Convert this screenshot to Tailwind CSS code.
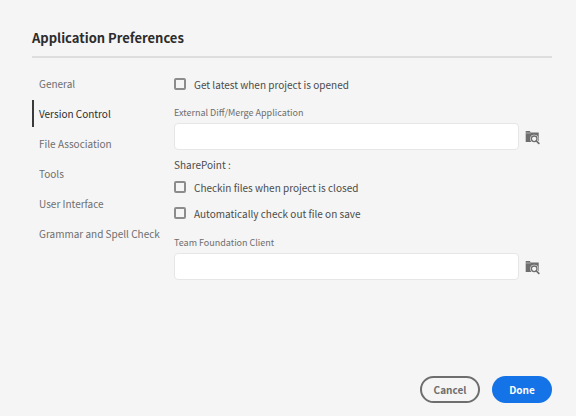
<!DOCTYPE html>
<html lang="en">
  <head>
    <meta charset="UTF-8" />
    <meta name="viewport" content="width=device-width, initial-scale=1.0" />
    <title>Application Preferences</title>
    <script src="https://cdn.jsdelivr.net/npm/@tailwindcss/browser@4"></script>
  </head>
  <body class="flex min-h-screen flex-col bg-[#f5f5f5] pt-6 pr-6 pb-[13px] pl-8 font-['Noto_Sans_CJK_SC','Noto_Sans',sans-serif] text-[10px] text-[#4b4b4b]">

    <!-- Header -->
    <header class="border-b-2 border-[#dedede] pb-1">
      <h1 class="text-[13px] leading-7 font-bold text-[#2c2c2c]">Application Preferences</h1>
    </header>

    <form class="flex flex-1 flex-col">
      <div class="mt-[10px] flex flex-1">
        <!-- Sections -->
        <nav class="w-[142px] shrink-0 text-[#6e6e6e]">
          <ul>
            <li class="flex h-[30px] items-center"><a href="#general" class="pl-[7px]">General</a></li>
            <li class="flex h-[30px] items-center"><a href="#version-control" aria-current="page" class="border-l-2 border-[#3a3a3a] pl-[5px] leading-[27px] text-[#2c2c2c]">Version Control</a></li>
            <li class="flex h-[30px] items-center"><a href="#file-association" class="pl-[7px]">File Association</a></li>
            <li class="flex h-[30px] items-center"><a href="#tools" class="pl-[7px]">Tools</a></li>
            <li class="flex h-[30px] items-center"><a href="#user-interface" class="pl-[7px]">User Interface</a></li>
            <li class="flex h-[30px] items-center"><a href="#grammar" class="pl-[7px] whitespace-nowrap">Grammar and Spell Check</a></li>
          </ul>
        </nav>

        <!-- Version control settings -->
        <section class="min-w-0 flex-1 pt-px">
          <label class="flex h-[30px] items-center gap-2">
            <input type="checkbox" class="size-3 appearance-none rounded-[2px] border-2 border-[#8c8c8c] checked:bg-[#6e6e6e]" />
            Get latest when project is opened
          </label>

          <label for="diff-app" class="mt-1 block text-[9px] leading-5 text-[#6e6e6e]">External Diff/Merge Application</label>
          <div class="flex items-center gap-[6px]">
            <input id="diff-app" type="text" class="h-[27px] min-w-0 flex-1 rounded-sm border border-[#e6e6e6] bg-white px-2" />
            <button type="button" aria-label="Browse for diff application" class="w-[27px] text-[#6e6e6e]">
              <svg class="h-4 w-[15px]" viewBox="0 0 15 16" fill="none"><path d="M.7 2h4.1l1 1.6h7.9V13H.7z" fill="currentColor"/><path d="M.7 4h5" stroke="#f5f5f5" stroke-width=".5"/><circle cx="9.2" cy="9.8" r="4" fill="#f5f5f5"/><path d="M11.4 12l2.4 2.4" stroke="#f5f5f5" stroke-width="3"/><circle cx="9.2" cy="9.8" r="2.8" stroke="currentColor" stroke-width="1.3"/><path d="M11.4 12l2.4 2.4" stroke="currentColor" stroke-width="1.7" stroke-linecap="round"/></svg>
            </button>
          </div>

          <fieldset class="mt-[6px]">
            <legend class="leading-[18px]">SharePoint :</legend>
            <label class="flex h-[26px] items-center gap-2">
              <input type="checkbox" class="size-3 appearance-none rounded-[2px] border-2 border-[#8c8c8c] checked:bg-[#6e6e6e]" />
              Checkin files when project is closed
            </label>
            <label class="flex h-[26px] items-center gap-2">
              <input type="checkbox" class="size-3 appearance-none rounded-[2px] border-2 border-[#8c8c8c] checked:bg-[#6e6e6e]" />
              Automatically check out file on save
            </label>
          </fieldset>

          <label for="tf-client" class="mt-[7px] block text-[9px] leading-5 text-[#6e6e6e]">Team Foundation Client</label>
          <div class="flex items-center gap-[6px]">
            <input id="tf-client" type="text" class="h-[27px] min-w-0 flex-1 rounded-sm border border-[#e6e6e6] bg-white px-2" />
            <button type="button" aria-label="Browse for Team Foundation client" class="w-[27px] text-[#6e6e6e]">
              <svg class="h-4 w-[15px]" viewBox="0 0 15 16" fill="none"><path d="M.7 2h4.1l1 1.6h7.9V13H.7z" fill="currentColor"/><path d="M.7 4h5" stroke="#f5f5f5" stroke-width=".5"/><circle cx="9.2" cy="9.8" r="4" fill="#f5f5f5"/><path d="M11.4 12l2.4 2.4" stroke="#f5f5f5" stroke-width="3"/><circle cx="9.2" cy="9.8" r="2.8" stroke="currentColor" stroke-width="1.3"/><path d="M11.4 12l2.4 2.4" stroke="currentColor" stroke-width="1.7" stroke-linecap="round"/></svg>
            </button>
          </div>
        </section>
      </div>

      <!-- Actions -->
      <footer class="flex justify-end gap-3 font-bold">
        <button type="button" class="flex h-[27px] w-[60px] items-center justify-center rounded-full border-2 border-[#6e6e6e] text-[#6e6e6e]">Cancel</button>
        <button type="submit" class="flex h-[27px] w-[60px] items-center justify-center rounded-full bg-[#1473e6] text-white">Done</button>
      </footer>
    </form>
  </body>
</html>
